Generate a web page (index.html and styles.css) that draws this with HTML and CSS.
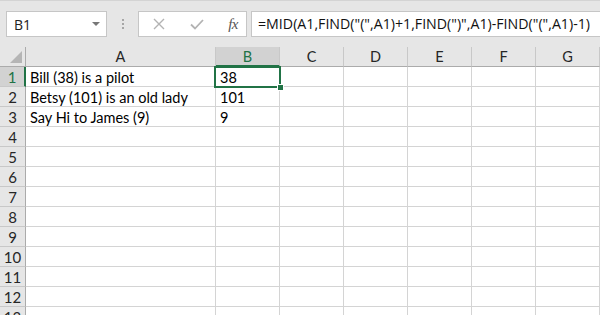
FILE: index.html
```html
<!DOCTYPE html>
<html>
<head>
<meta charset="utf-8">
<link rel="stylesheet" href="styles.css">
</head>
<body>
<div class="app">
  <div class="toolbar">
    <div class="namebox">
      <span class="name">B1</span>
      <span class="caret"></span>
    </div>
    <div class="grip"><i></i><i></i><i></i></div>
    <div class="btns">
      <svg class="ic" width="14" height="14" viewBox="0 0 14 14"><path d="M2 2 L12 12 M12 2 L2 12" stroke="#b3b3b3" stroke-width="1.4" fill="none"/></svg>
      <svg class="ic" width="16" height="14" viewBox="0 0 16 14"><path d="M2 7.5 L6 11.5 L14 3" stroke="#b3b3b3" stroke-width="1.8" fill="none"/></svg>
      <span class="fx">fx</span>
    </div>
    <div class="formula">=MID(A1,FIND("(",A1)+1,FIND(")",A1)-FIND("(",A1)-1)</div>
  </div>
  <div class="sheet">
    <div class="corner"><span class="tri"></span></div>
    <div class="ch">A</div>
    <div class="ch sel">B</div>
    <div class="ch">C</div>
    <div class="ch">D</div>
    <div class="ch">E</div>
    <div class="ch">F</div>
    <div class="ch">G</div>

    <div class="rh sel">1</div><div class="c">Bill (38) is a pilot</div><div class="c">38</div><div class="c"></div><div class="c"></div><div class="c"></div><div class="c"></div><div class="c"></div>
    <div class="rh">2</div><div class="c">Betsy (101) is an old lady</div><div class="c">101</div><div class="c"></div><div class="c"></div><div class="c"></div><div class="c"></div><div class="c"></div>
    <div class="rh">3</div><div class="c">Say Hi to James (9)</div><div class="c">9</div><div class="c"></div><div class="c"></div><div class="c"></div><div class="c"></div><div class="c"></div>
    <div class="rh">4</div><div class="c"></div><div class="c"></div><div class="c"></div><div class="c"></div><div class="c"></div><div class="c"></div><div class="c"></div>
    <div class="rh">5</div><div class="c"></div><div class="c"></div><div class="c"></div><div class="c"></div><div class="c"></div><div class="c"></div><div class="c"></div>
    <div class="rh">6</div><div class="c"></div><div class="c"></div><div class="c"></div><div class="c"></div><div class="c"></div><div class="c"></div><div class="c"></div>
    <div class="rh">7</div><div class="c"></div><div class="c"></div><div class="c"></div><div class="c"></div><div class="c"></div><div class="c"></div><div class="c"></div>
    <div class="rh">8</div><div class="c"></div><div class="c"></div><div class="c"></div><div class="c"></div><div class="c"></div><div class="c"></div><div class="c"></div>
    <div class="rh">9</div><div class="c"></div><div class="c"></div><div class="c"></div><div class="c"></div><div class="c"></div><div class="c"></div><div class="c"></div>
    <div class="rh">10</div><div class="c"></div><div class="c"></div><div class="c"></div><div class="c"></div><div class="c"></div><div class="c"></div><div class="c"></div>
    <div class="rh">11</div><div class="c"></div><div class="c"></div><div class="c"></div><div class="c"></div><div class="c"></div><div class="c"></div><div class="c"></div>
    <div class="rh">12</div><div class="c"></div><div class="c"></div><div class="c"></div><div class="c"></div><div class="c"></div><div class="c"></div><div class="c"></div>
    <div class="rh">13</div><div class="c"></div><div class="c"></div><div class="c"></div><div class="c"></div><div class="c"></div><div class="c"></div><div class="c"></div>

    <div class="selection"><span class="handle"></span></div>
  </div>
</div>
</body>
</html>
```

FILE: styles.css
```css
* { box-sizing: border-box; }
html, body { margin: 0; padding: 0; }
body {
  width: 600px;
  height: 315px;
  overflow: hidden;
  background: #e6e6e6;
  font-family: "Lato", "Liberation Sans", sans-serif;
}
.app { width: 600px; }

.toolbar {
  height: 47px;
  border-top: 1px solid #d4d4d4;
  padding-top: 10px;
  display: flex;
  align-items: flex-start;
}
.namebox {
  margin-left: 6px;
  width: 101px;
  height: 26px;
  background: #fff;
  border: 1px solid #c6c6c6;
  display: flex;
  align-items: center;
  justify-content: space-between;
  padding: 0 6px 0 7px;
}
.name {
  font-family: "Open Sans", "Noto Sans", sans-serif;
  font-size: 14px;
  color: #222;
}
.caret {
  width: 0; height: 0;
  border-left: 4px solid transparent;
  border-right: 4px solid transparent;
  border-top: 4px solid #777;
}
.grip {
  width: 31px;
  height: 26px;
  display: flex;
  flex-direction: column;
  align-items: center;
  justify-content: center;
  gap: 2px;
}
.grip i {
  display: block;
  width: 2px;
  height: 2px;
  background: #a6a6a6;
}
.btns {
  width: 109px;
  height: 26px;
  background: #fff;
  border: 1px solid #c6c6c6;
  display: flex;
  align-items: center;
  padding: 0 8px 0 13px;
  justify-content: space-between;
}
.fx {
  font-family: "Liberation Serif", "DejaVu Serif", serif;
  font-style: italic;
  font-size: 15px;
  color: #555;
  letter-spacing: -0.5px;
}
.formula {
  margin-left: 4px;
  flex: 1;
  height: 26px;
  background: #fff;
  border: 1px solid #c6c6c6;
  border-right: none;
  padding-left: 6px;
  font-family: "Open Sans", "Noto Sans", sans-serif;
  font-size: 14.2px;
  line-height: 24px;
  color: #111;
  white-space: nowrap;
  overflow: hidden;
}

.sheet {
  position: relative;
  display: grid;
  grid-template-columns: 26px 190px repeat(6, 64px);
  grid-auto-rows: 20px;
  background: #fff;
}
.corner {
  background: #e6e6e6;
  border-right: 1px solid #ababab;
  border-bottom: 1px solid #ababab;
  position: relative;
}
.tri {
  position: absolute;
  right: 3px;
  bottom: 3px;
  width: 0; height: 0;
  border-left: 12px solid transparent;
  border-bottom: 12px solid #b5b5b5;
}
.ch {
  background: #e6e6e6;
  border-right: 1px solid #c8c8c8;
  border-bottom: 1px solid #ababab;
  text-align: center;
  font-size: 14.5px;
  line-height: 20px;
  color: #262626;
}
.ch.sel {
  background: #d2d2d2;
  border-bottom: 2px solid #217346;
  color: #217346;
}
.rh {
  background: #e6e6e6;
  border-right: 1px solid #ababab;
  border-bottom: 1px solid #c8c8c8;
  text-align: center;
  font-size: 15px;
  line-height: 21px;
  color: #262626;
}
.rh.sel {
  background: #d2d2d2;
  border-right: 2px solid #217346;
  color: #217346;
}
.c {
  border-right: 1px solid #d4d4d4;
  border-bottom: 1px solid #d4d4d4;
  padding-left: 4px;
  font-size: 14.5px;
  line-height: 21px;
  color: #000;
  white-space: nowrap;
}
.selection {
  position: absolute;
  left: 214px;
  top: 19px;
  width: 67px;
  height: 22px;
  border: 2px solid #217346;
}
.handle {
  position: absolute;
  right: -5px;
  bottom: -5px;
  width: 7px;
  height: 7px;
  background: #217346;
  border: 1px solid #fff;
}
```
